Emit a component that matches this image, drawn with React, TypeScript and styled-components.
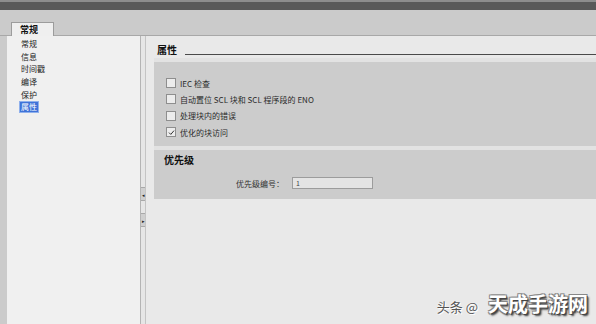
import React from 'react';
import styled, {createGlobalStyle} from 'styled-components';

const GlobalStyle = createGlobalStyle`
    html, body {
        margin: 0;
        padding: 0;
        width: 596px;
        height: 324px;
        overflow: hidden;
        background: #e9e9e9;
        font-family: "Noto Sans CJK SC", "Noto Sans", "Liberation Sans", sans-serif;
    }
`;

const Page = styled.div`
    position: relative;
    width: 596px;
    height: 324px;
    display: flex;
    flex-direction: column;
    overflow: hidden;
`;

const TopBar = styled.div`
    height: 8px;
    background: #595959;
    border-top: 2px solid #8d8d8d;
    flex: none;
`;

const TabStrip = styled.div`
    height: 25px;
    background: #cbcbcb;
    border-bottom: 1px solid #a8a8a8;
    display: flex;
    align-items: flex-end;
    padding-left: 11px;
    flex: none;
`;

const Tab = styled.div`
    width: 33px;
    height: 13px;
    margin-bottom: -1px;
    background: #efefef;
    border: 1px solid #9c9c9c;
    border-bottom: none;
    font-size: 9px;
    font-weight: bold;
    line-height: 13px;
    color: #111;
    padding-left: 8px;
    box-sizing: content-box;
`;

const Body = styled.div`
    flex: 1;
    display: flex;
    min-height: 0;
`;

const Gutter = styled.div`
    width: 7px;
    background: #cbcbcb;
    flex: none;
`;

const List = styled.div`
    width: 133px;
    background: #f0f0f0;
    padding-top: 2px;
    flex: none;
    display: flex;
    flex-direction: column;
`;

const ListItem = styled.div<{$selected?: boolean}>`
    height: 12.6px;
    display: flex;
    align-items: center;
    padding-left: 12px;

    span {
        font-size: 8px;
        line-height: 10px;
        color: ${p => (p.$selected ? '#fff' : '#222')};
        background: ${p => (p.$selected ? '#3f73d8' : 'transparent')};
        padding: 0 1px;
        border: 1px solid ${p => (p.$selected ? '#8fb0ec' : 'transparent')};
    }
`;

const Splitter = styled.div`
    width: 4px;
    background: #e6e6e6;
    border-left: 1px solid #b4b4b4;
    border-right: 1px solid #c4c4c4;
    flex: none;
    display: flex;
    flex-direction: column;
    align-items: center;
    padding-top: 151px;
    gap: 12px;
`;

const SplitButton = styled.div`
    width: 4px;
    height: 12px;
    background: #cfcfcf;
    border-top: 1px solid #a9a9a9;
    border-bottom: 1px solid #a9a9a9;
    display: flex;
    align-items: center;
    justify-content: center;
    color: #222;
    font-size: 5px;
    line-height: 1;
`;

const Content = styled.div`
    flex: 1;
    background: #e9e9e9;
    padding: 8px 0 0 8px;
    display: flex;
    flex-direction: column;
`;

const SectionTitle = styled.div`
    display: flex;
    align-items: flex-end;
    height: 12px;
    padding-left: 3px;
    margin-bottom: 2px;
`;

const TitleText = styled.span`
    font-size: 10px;
    font-weight: bold;
    color: #111;
    line-height: 12px;
`;

const TitleRule = styled.div`
    flex: 1;
    height: 1px;
    background: #4a4a4a;
    margin: 0 0 1px 8px;
`;

const Panel = styled.div<{$height: number}>`
    height: ${p => p.$height}px;
    background: #cccccc;
    border-top: 4px solid #e2e2e2;
    box-sizing: border-box;
    display: flex;
    flex-direction: column;
`;

const CheckList = styled.div`
    padding: 13px 0 0 12px;
    display: flex;
    flex-direction: column;
`;

const CheckRow = styled.label`
    height: 16.3px;
    display: flex;
    align-items: center;
    gap: 4px;
    font-size: 8px;
    color: #2a2a2a;
`;

const Box = styled.span`
    width: 8px;
    height: 8px;
    background: #ececec;
    border: 1px solid #8e8e8e;
    display: flex;
    align-items: center;
    justify-content: center;
    flex: none;
`;

const PanelTitle = styled.div`
    font-size: 10px;
    font-weight: bold;
    color: #111;
    padding: 3px 0 0 10px;
    line-height: 14px;
`;

const FieldRow = styled.div`
    display: flex;
    align-items: center;
    margin: 10px 0 0 82px;
    gap: 8px;
`;

const FieldLabel = styled.span`
    font-size: 8px;
    color: #333;
`;

const FieldInput = styled.div`
    width: 76px;
    height: 10px;
    background: #e4e4e4;
    border: 1px solid #9c9c9c;
    font-size: 7px;
    line-height: 10px;
    padding-left: 3px;
    color: #444;
`;

const Watermark = styled.div`
    position: absolute;
    right: 8px;
    bottom: 6px;
    display: flex;
    align-items: flex-end;
    gap: 10px;
`;

const WatermarkSmall = styled.span`
    font-size: 13px;
    color: #555;
    text-shadow: 0 0 2px #fff, 1px 1px 0 #fff;
    margin-bottom: 2px;
`;

const WatermarkBig = styled.span`
    font-size: 20px;
    font-weight: bold;
    color: #fff;
    letter-spacing: 0;
    text-shadow: 1px 1px 0 #444, -1px -1px 0 #888, 1px -1px 0 #888, -1px 1px 0 #888, 2px 2px 2px #333;
`;

const Check = () => (
    <svg width='7' height='7' viewBox='0 0 7 7'>
        <path d='M1 3.6 L2.8 5.4 L6 1.6' fill='none' stroke='#333' strokeWidth='1' />
    </svg>
);

const navItems = ['常规', '信息', '时间戳', '编译', '保护', '属性'];

const options = [
    {label: 'IEC 检查', checked: false},
    {label: '自动置位 SCL 块和 SCL 程序段的 ENO', checked: false},
    {label: '处理块内的错误', checked: false},
    {label: '优化的块访问', checked: true}
];

const App = () => (
    <Page>
        <GlobalStyle />
        <TopBar />
        <TabStrip>
            <Tab>常规</Tab>
        </TabStrip>
        <Body>
            <Gutter />
            <List>
                {navItems.map((item, i) => (
                    <ListItem key={item} $selected={i === navItems.length - 1}>
                        <span>{item}</span>
                    </ListItem>
                ))}
            </List>
            <Splitter>
                <SplitButton>◂</SplitButton>
                <SplitButton>▸</SplitButton>
            </Splitter>
            <Content>
                <SectionTitle>
                    <TitleText>属性</TitleText>
                    <TitleRule />
                </SectionTitle>
                <Panel $height={88}>
                    <CheckList>
                        {options.map(o => (
                            <CheckRow key={o.label}>
                                <Box>{o.checked && <Check />}</Box>
                                {o.label}
                            </CheckRow>
                        ))}
                    </CheckList>
                </Panel>
                <Panel $height={53}>
                    <PanelTitle>优先级</PanelTitle>
                    <FieldRow>
                        <FieldLabel>优先级编号：</FieldLabel>
                        <FieldInput>1</FieldInput>
                    </FieldRow>
                </Panel>
            </Content>
        </Body>
        <Watermark>
            <WatermarkSmall>头条 @</WatermarkSmall>
            <WatermarkBig>天成手游网</WatermarkBig>
        </Watermark>
    </Page>
);

export default App;
